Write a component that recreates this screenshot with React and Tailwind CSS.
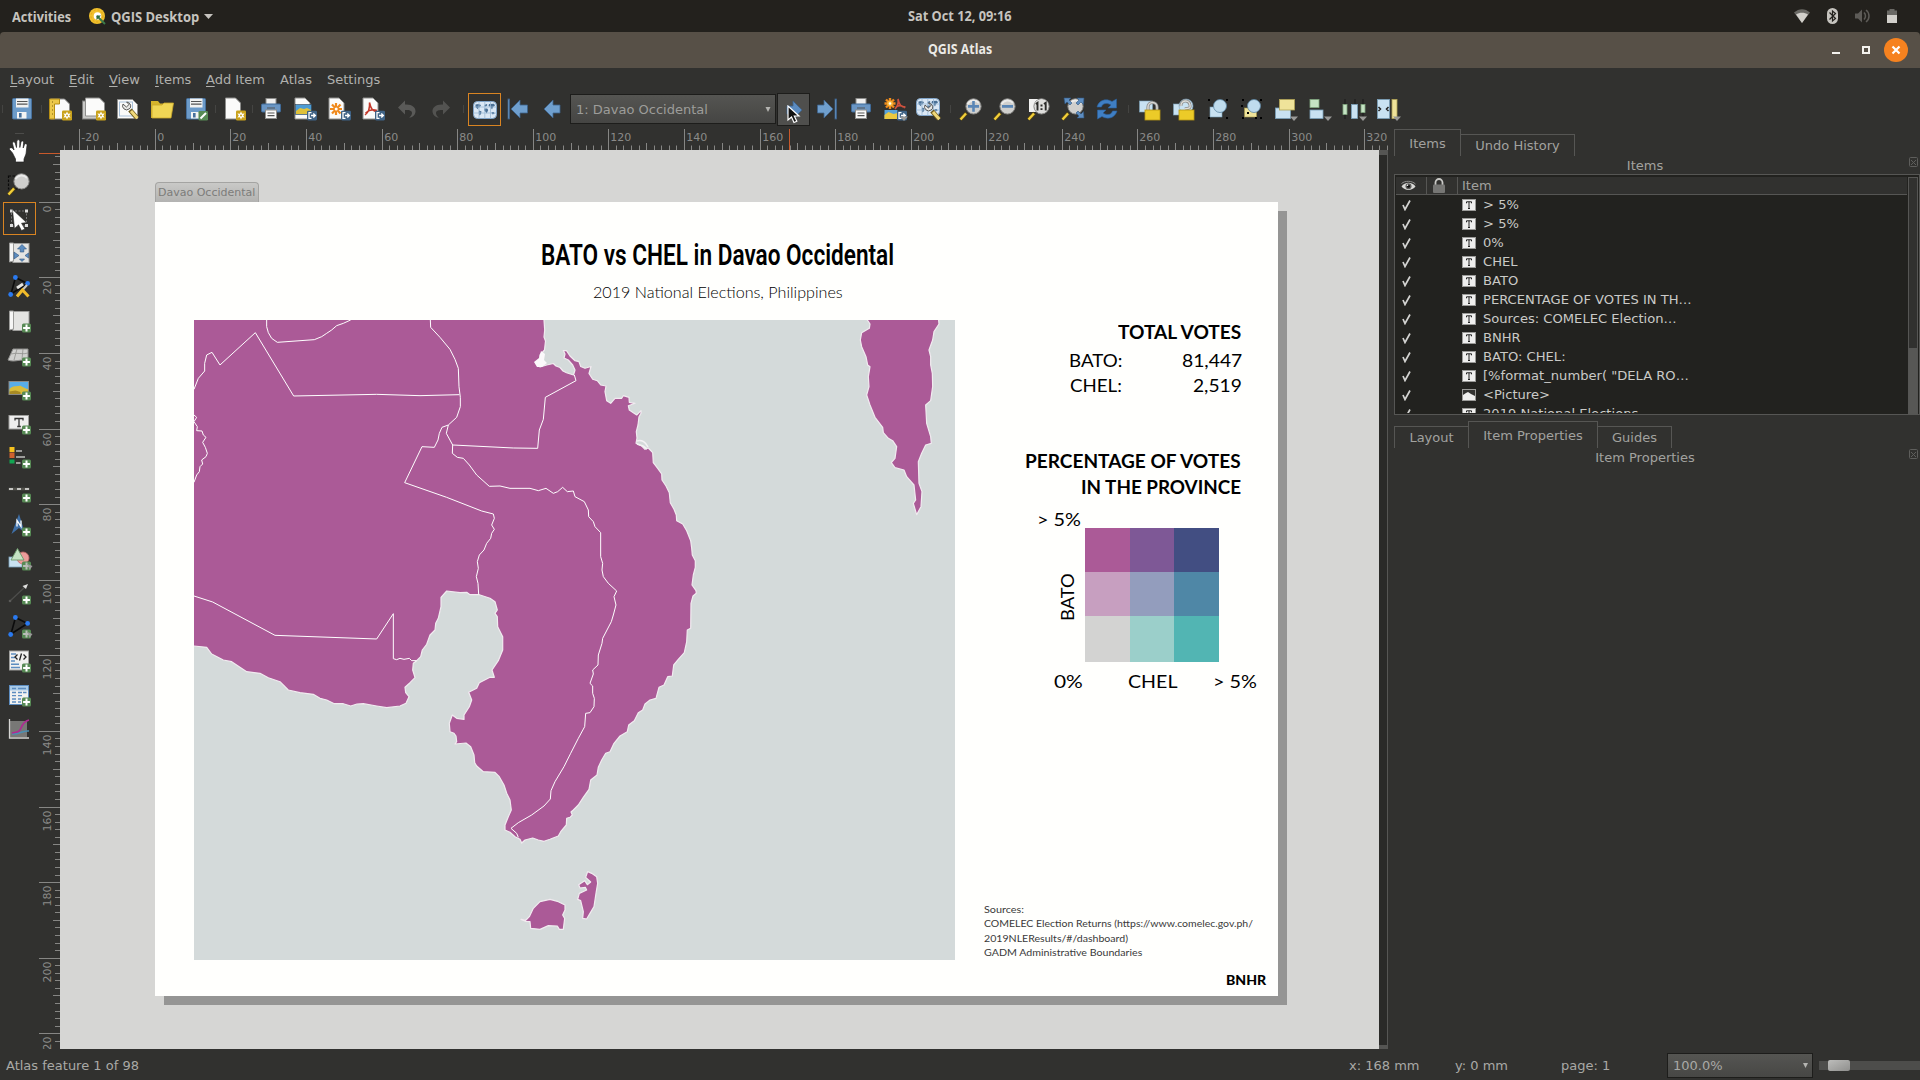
import React, { useLayoutEffect, useRef, useState } from "react";

/* ---------- text that is condensed or widened to a given width ---------- */
function Fit({ w, className, children }) {
  const ref = useRef(null);
  const [s, setS] = useState(1);
  useLayoutEffect(() => {
    setS(w / ref.current.offsetWidth);
  }, [w]);
  return (
    <span
      ref={ref}
      className={"inline-block origin-left whitespace-pre " + (className || "")}
      style={{ transform: `scaleX(${s})` }}
    >
      {children}
    </span>
  );
}

/* ---------- icon parts ---------- */
const Plus = ({ x = 7.5, y = 7, dim }) => (
  <g transform={`translate(${x} ${y})`}>
    <rect x="-4.5" y="-4.5" width="9" height="9" rx="1.5" fill="#578a55" />
    <path d="M0-3.4V3.4M-3.4 0H3.4" stroke={dim ? "#b9bdb8" : "#fff"} strokeWidth="2" />
    {dim && <path d="M1-2 6 0 3 4z" fill="#9a9a98" />}
  </g>
);
const Star = () => (
  <g transform="translate(7 6.5)">
    <rect x="-5" y="-5" width="10" height="10" rx="1.3" fill="#c9a21c" />
    <path d="M0-4 1.1-1.7 3.6-2 2.2 0 3.6 2 1.1 1.7 0 4-1.1 1.7-3.6 2-2.2 0-3.6-2-1.1-1.7z" fill="#fff" />
    <circle r="1" fill="#c9a21c" />
  </g>
);
const Export = () => (
  <g transform="translate(7 6.5)">
    <rect x="-5" y="-4.7" width="10" height="9.6" rx="1.3" fill="#3f6386" />
    <path d="M-.5-2.8H-3V2.8H-.5M-1 0H3M1.3-2 3.4 0 1.3 2" stroke="#fff" strokeWidth="1.3" fill="none" />
  </g>
);
const Sheet = ({ x = -9, y = -11, w = 15, h = 21 }) => (
  <path
    d={`M${x} ${y}h${w - 5}l5 5v${h - 5}h${-w}z`}
    fill="#fbfbfa"
    stroke="#8e8e8c"
    strokeWidth="1"
  />
);
const Wrench = () => (
  <g>
    <path d="M1 0 8 8" stroke="#6d5a1c" strokeWidth="4.6" />
    <path d="M2 1 8.4 8.3" stroke="#f0d878" strokeWidth="3" />
    <path d="M-6-6a4 4 0 0 0 6 5l1.4-1.2A4.2 4.2 0 0 0-2.4-8L0-5.5-2.6-3z" fill="#e6e6e4" stroke="#4c4c4a" strokeWidth=".9" />
  </g>
);
const Lens = ({ children }) => (
  <g>
    <path d="M-10.5 10.5-4.5 4" stroke="#5b4a12" strokeWidth="3.6" />
    <path d="M-10.5 10.5-5 4.5" stroke="#f2cf3a" strokeWidth="2.4" />
    <circle cx="2.5" cy="-2.6" r="7.6" fill="#cfcfcd" stroke="#8a8a88" strokeWidth="1" />
    <path d="M-3.5-5A7 7 0 0 1 8-6" stroke="#ebebea" strokeWidth="2" fill="none" />
    {children}
  </g>
);
const World = () => (
  <g>
    <rect x="-11.5" y="-8.5" width="23" height="17" rx="4" fill="#dbe8f5" stroke="#7fa3c8" strokeWidth="1" />
    <path d="M-9.500-5.500l3-.5 2.500 1-1 2-2 1 .5 1.500-1.500-1-1.500-1.500zM-6 .5l2.500 1-.5 2.500-1.500 1.500-.8-2.500zM-.5-5l2-1 1 1-1.500 1.500-1.500 0zM-.8-1.500l3 0 1 1.500-1.500 3.500-1-1.500-1.500-1.500zM4-6l5-.3 1 1.800-2 1.500-1 2.500-1.500-2.500-2-1zM6.500 2l2.500 0 .5 2-2.500.3z" fill="#4a7096" />
    <path d="M-6-8.500V8.500M-.2-8.500V8.500M5.500-8.500V8.500M-11.500-3H11.500M-11.500 3H11.500" stroke="#9dbad6" strokeWidth=".8" />
  </g>
);
const Printer = () => (
  <g>
    <rect x="-5" y="-10.5" width="10" height="7" fill="#f0f0ef" stroke="#8e8e8c" />
    <rect x="-9.5" y="-5" width="19" height="8" rx="1" fill="#6a96c4" stroke="#3f6a98" />
    <rect x="-5.5" y="1" width="11" height="8.5" fill="#fafaf9" stroke="#8e8e8c" />
    <path d="M-4-1H4M-3.5 4H3.5M-3.5 6.6H3.5" stroke="#555" strokeWidth="1.2" />
  </g>
);
const Down = ({ x = 8 }) => <path d={`M${x - 4} 7.5h8l-4 4.5z`} fill="#9a9a98" />;
const Nodes = () => (
  <g>
    <path d="M-8 7-3.5-9.5 8.5-3.5z" fill="none" stroke="#0c0c0c" strokeWidth="1.6" />
    <g fill="#2a7af0">
      <circle cx="-8.3" cy="7.5" r="2.4" />
      <circle cx="-3.6" cy="-9.5" r="2.4" />
      <circle cx="8.6" cy="-3.6" r="2.4" />
    </g>
  </g>
);
const Roll = () => (
  <g>
    <rect x="-6" y="-9.5" width="16" height="19" fill="#e4e4e2" stroke="#9c9c9a" />
    <path d="M-9.5-10h4V8l-4 1z" fill="#f6f6f5" stroke="#9c9c9a" />
  </g>
);
const Handles = () => (
  <g fill="#000">
    <rect x="-10" y="-10" width="2" height="2" />
    <rect x="8" y="-10" width="2" height="2" />
    <rect x="-10" y="8" width="2" height="2" />
    <rect x="8" y="8" width="2" height="2" />
  </g>
);

const ICONS = {
  save: (
    <g>
      <rect x="-9.5" y="-10.5" width="19" height="20.5" rx="1" fill="#6c9bc9" stroke="#47709c" />
      <rect x="-6" y="-10.5" width="12.5" height="9" fill="#f2f2f1" />
      <path d="M-5-7.5H5.5M-5-4.8H5.5" stroke="#555" strokeWidth="1.2" />
      <rect x="-5" y="3" width="9.5" height="6.5" fill="#f4f4f3" />
      <rect x="-3" y="4" width="2.6" height="4.5" fill="#47709c" />
    </g>
  ),
  newLayout: (
    <g>
      <Sheet x={-9.5} y={-10} w={19} h={20} />
      <path d="M-10.5-10h10v5h-5v15h-5z" fill="#ecc84a" stroke="#b58d14" />
      <path d="M-8-7h1M-8-3h1M-8 1h1M-8 5h1" stroke="#7a5e0c" />
      <Star />
    </g>
  ),
  duplicate: (
    <g>
      <rect x="-11.5" y="-8" width="18" height="18" fill="#c9c9c7" stroke="#7e7e7c" />
      <Sheet x={-8.5} y={-11} w={19} h={18} />
      <Star />
    </g>
  ),
  manager: (
    <g>
      <Sheet x={-10.5} y={-9.5} w={20} h={19} />
      <rect x="-8.5" y="-7" width="13" height="14" fill="none" stroke="#a9c1da" />
      <g transform="translate(1 1)"><Wrench /></g>
    </g>
  ),
  open: (
    <g>
      <path d="M-11-8h7l2 2.5h9V9H-11z" fill="#d6b42c" />
      <path d="M-10 9V-4H0l2-2H11.5L9 9z" fill="#f0d655" stroke="#c9a728" strokeWidth=".8" />
    </g>
  ),
  saveTemplate: (
    <g>
      <rect x="-9.5" y="-10.5" width="19" height="20.5" rx="1" fill="#6c9bc9" stroke="#47709c" />
      <rect x="-6" y="-10.5" width="12.5" height="9" fill="#f2f2f1" />
      <path d="M-5-7.5H5.5M-5-4.8H5.5" stroke="#555" strokeWidth="1.2" />
      <rect x="-5" y="3" width="9.5" height="6.5" fill="#f4f4f3" />
      <rect x="-3" y="4" width="2.6" height="4.5" fill="#47709c" />
      <rect x="2.5" y="2" width="9.5" height="9.5" rx="1.3" fill="#578a55" />
      <path d="M4.5 9.5 10 4" stroke="#fff" strokeWidth="2" />
    </g>
  ),
  addPage: (
    <g>
      <Sheet x={-8.5} />
      <Star />
    </g>
  ),
  print: <Printer />,
  image: (
    <g>
      <Sheet x={-10} />
      <rect x="-9.5" y="-4.5" width="16" height="10" fill="#4b9bd4" stroke="#345" strokeWidth=".6" />
      <path d="M-9 5V2l4-3 4 1 3-1 4 2v4z" fill="#e0c23a" />
      <Export />
    </g>
  ),
  svg: (
    <g>
      <Sheet x={-10} />
      <path d="M-3-6V6M-9 0H3M-7-4.5 1.5 4.5M-7 4.5 1.5-4.5" stroke="#f08a1c" strokeWidth="2.2" />
      <circle cx="-2.8" r="1.5" fill="#fff" />
      <Export />
    </g>
  ),
  pdf: (
    <g>
      <Sheet x={-10} />
      <path d="M-3.5-6.5C-2 1 0 2 5 3M-3.5-6.5C-3 0-4.5 3.500-8 6M-7.500 4C-4 1 0 0 4 1.500" stroke="#c4392b" strokeWidth="1.500" fill="none" />
      <Export />
    </g>
  ),
  undo: <path d="M-9-1.500-2-8.500V-4.500C5-5 9-1.500 8.500 3 8 6.500 5.500 8.500 2 8.800 5 6.500 5.500 4 4.500 2.500 3.500 1-.5 1-2 1V5.500z" fill="#5a5a58" />,
  redo: <path d="M9-1.500 2-8.500V-4.500C-5-5-9-1.500-8.500 3-8 6.500-5.500 8.500-2 8.800-5 6.500-5.500 4-4.500 2.500-3.500 1 .5 1 2 1V5.500z" fill="#535351" />,
  world: <World />,
  first: (
    <g fill="#6f9fce" stroke="#3c628c" strokeWidth=".8">
      <path d="M-7 0 2-9V-4H9.500V4H2V9z" />
      <rect x="-10" y="-10" width="1.500" height="20" />
    </g>
  ),
  prev: <path d="M-8 0 1-9V-4H8V4H1V9z" fill="#6f9fce" stroke="#3c628c" strokeWidth=".8" />,
  next: <path d="M8 0-1-9V-4H-7V4H-1V9z" fill="#5b8bc0" stroke="#3c628c" strokeWidth=".8" />,
  last: (
    <g fill="#6f9fce" stroke="#3c628c" strokeWidth=".8">
      <path d="M6 0-3-9V-4H-9.500V4H-3V9z" />
      <rect x="8" y="-10" width="1.500" height="20" />
    </g>
  ),
  exportAtlas: (
    <g>
      <rect x="-10.500" y="1" width="13" height="9" fill="#5aa4d8" />
      <path d="M-10.500 10V6l4-3 5 2 4-1v6z" fill="#ecc940" />
      <path d="M-5-11V0M-10.500-5.500H.5M-9-9.500-1-1.500M-9-1.500-1-9.500" stroke="#f08c1c" strokeWidth="2.400" />
      <circle cx="-5" cy="-5.500" r="2.800" fill="#f6b73c" />
      <circle cx="-5" cy="-5.500" r="1.300" fill="#fff" />
      <path d="M3-10C4-4 6-2 10.500-2M3-10C4-5 2-2 0 0M1-2C4-4 7-4 10-1" stroke="#d0523e" strokeWidth="1.700" fill="none" />
      <Export />
      <Down x={9} />
    </g>
  ),
  atlasSettings: (
    <g>
      <g transform="translate(-1 -2)"><World /></g>
      <g transform="translate(2 2)"><Wrench /></g>
    </g>
  ),
  zoomIn: <Lens><path d="M2.500-8V2.800M-3-2.600H8" stroke="#5a86b6" strokeWidth="2.600" /></Lens>,
  zoomOut: <Lens><path d="M-3-2.600H8" stroke="#5a86b6" strokeWidth="2.800" /></Lens>,
  zoomActual: (
    <g>
      <rect x="-10" y="-10" width="9" height="13" fill="#f1f1f0" />
      <Lens>
        <circle cx="2.500" cy="-2.600" r="6.800" fill="#dededc" />
        <path d="M-3.200-5-1.500-6.200V1.500M5-5 6.700-6.200V1.500" stroke="#2c2c2a" strokeWidth="1.900" fill="none" />
        <path d="M1.500-4.500h2v1.900h-2zM1.500-.8h2v1.900h-2z" fill="#2c2c2a" />
      </Lens>
    </g>
  ),
  zoomFull: (
    <g>
      <Lens />
      <g fill="#5d8dc0" stroke="#2f5680" strokeWidth=".6">
        <path d="M-9-11h7L-4-9l3 3-2 2-3-3-2 2zM11-11H4l2 2-3 3 2 2 3-3 2.500 2.500zM11 9H4l2-2-3-3 2-2 3 3 2.500-2.500z" />
      </g>
    </g>
  ),
  refresh: (
    <g fill="#3f7fc4" stroke="#2a5f9c" strokeWidth=".6">
      <path d="M-10-2C-8-9-1-11 5-7.500L9.500-10V-1H1L4-4C-1-7-5-5-5.500-2z" />
      <path d="M10 2C8 9 1 11-5 7.500L-9.500 10V1H-1L-4 4C1 7 5 5 5.500 2z" />
    </g>
  ),
  lock: (
    <g>
      <rect x="-10.500" y="-8" width="13" height="11" fill="#c9e2f2" stroke="#7aa0ba" strokeWidth=".6" />
      <path d="M-2 1V-2a4.500 4.500 0 0 1 9 0V1" fill="none" stroke="#8c8c8a" strokeWidth="3.200" />
      <path d="M-2 1V-2a4.500 4.500 0 0 1 9 0V1" fill="none" stroke="#d9d9d6" strokeWidth="1.500" />
      <rect x="-5" y="1" width="15" height="10" fill="#eccb28" stroke="#b8960f" strokeWidth=".8" />
    </g>
  ),
  unlock: (
    <g>
      <rect x="-10.500" y="-5" width="10" height="11" fill="#c9e2f2" stroke="#7aa0ba" strokeWidth=".6" />
      <circle cx="2" cy="-3" r="7" fill="#c9e2f2" stroke="#7aa0ba" strokeWidth=".6" />
      <path d="M-3-3a4.500 4.500 0 0 1 9-1C7 0 4-1 1 0" fill="none" stroke="#8c8c8a" strokeWidth="3" />
      <path d="M-3-3a4.500 4.500 0 0 1 9-1C7 0 4-1 1 0" fill="none" stroke="#dededb" strokeWidth="1.400" />
      <rect x="-5" y="1" width="15" height="10" fill="#eccb28" stroke="#b8960f" strokeWidth=".8" />
    </g>
  ),
  group: (
    <g>
      <rect x="-8" y="-2" width="12" height="10" fill="#c9e2f2" stroke="#7aa0ba" strokeWidth=".6" />
      <circle cx="2" cy="-3" r="6.500" fill="#bfdcee" stroke="#5d87a4" strokeWidth=".8" />
      <Handles />
    </g>
  ),
  ungroup: (
    <g>
      <rect x="-7.500" y="-1" width="12" height="9" fill="#efe39a" stroke="#a89a4a" strokeWidth=".6" />
      <circle cx="2" cy="-3" r="6.500" fill="#bfdcee" stroke="#5d87a4" strokeWidth=".8" />
      <Handles />
      <path d="M-11-4h2v2h-2zM-5 3h2v2h-2zM3 8h2v2h-2z" fill="#000" />
    </g>
  ),
  raise: (
    <g>
      <rect x="-10.500" y="-1" width="15" height="10.500" fill="#c9e2f2" stroke="#7aa0ba" strokeWidth=".8" />
      <rect x="-6.500" y="-9.500" width="15" height="10.500" fill="#efe39a" stroke="#b0a256" strokeWidth=".8" />
      <Down />
    </g>
  ),
  align: (
    <g>
      <rect x="-10" y="-9.500" width="9" height="8" fill="#c5e3c4" stroke="#7fa67e" strokeWidth=".8" />
      <rect x="-10" y="1" width="13" height="8.500" fill="#c9e2f2" stroke="#7aa0ba" strokeWidth=".8" />
      <Down />
    </g>
  ),
  distribute: (
    <g>
      <path d="M-9-10V10M1-10V10M9-10V10" stroke="#151515" strokeWidth=".8" />
      <rect x="-11" y="-4.500" width="4" height="10" fill="#c5e3c4" stroke="#7fa67e" strokeWidth=".8" />
      <rect x="-2.500" y="-4.500" width="6" height="14" fill="#c9e2f2" stroke="#7aa0ba" strokeWidth=".8" />
      <rect x="7" y="-4.500" width="4" height="8" fill="#c5e3c4" stroke="#7fa67e" strokeWidth=".8" />
      <Down x={9} />
    </g>
  ),
  resize: (
    <g>
      <rect x="-10.500" y="-9.500" width="12" height="19" fill="#c9e2f2" stroke="#7aa0ba" strokeWidth=".8" />
      <path d="M-9.500-2-7.500 0-9.500 2M.5-2-1.500 0 .5 2" stroke="#222" strokeWidth="1.500" fill="none" />
      <rect x="4" y="-9.500" width="5" height="19" fill="#efe39a" stroke="#b0a256" strokeWidth=".8" />
      <Down x={9} />
    </g>
  ),
  hand: (
    <path
      d="M-6.500 2-9.500 -1.500C-10-3-8-4-6.500-2.800L-5-1-6.500-7.500C-6.500-9.500-4.500-9.800-3.800-8L-2.500-3.500-2.200-10C-1.800-11.700.8-11.700.8-9.800V-3.500L2-9C2.500-10.700 4.800-10.200 4.600-8.500L4.200-3 5.500-6.500C6.300-8 8.500-7.200 8-5.500L7 3 5 8V11H-3.500V8z"
      fill="#fff"
      stroke="#222"
      strokeWidth=".7"
    />
  ),
  zoomTool: (
    <g>
      <rect x="-10.500" y="-8" width="12" height="13" fill="none" stroke="#0a0a0a" strokeWidth="1.200" strokeDasharray="2.500 1.500" />
      <Lens />
    </g>
  ),
  select: (
    <g>
      <rect x="-8.500" y="-8" width="15" height="15" fill="none" stroke="#777" strokeDasharray="2 1.500" />
      <g fill="#ddd">
        <rect x="-10" y="-9.500" width="3" height="3" />
        <rect x="5" y="-9.500" width="3" height="3" />
        <rect x="-10" y="5" width="3" height="3" />
        <rect x="5" y="5" width="3" height="3" />
      </g>
      <path d="M-7.500-9.500 6.500 3.500 1.500 4.200 4.800 10 1.500 11.500-1.500 5.800-5.500 9.500z" fill="#fff" stroke="#222" strokeWidth=".5" />
    </g>
  ),
  moveContent: (
    <g>
      <Roll />
      <path d="M3-8.500 7.500-4H4.800V-1H1.200V-4H-1.500zM3 8.500 .5 6h5zM-5-1 0 2.500-5 6zM9.500 0v5L6 2.500z" fill="#5d8dc0" stroke="#2f5680" strokeWidth=".6" />
    </g>
  ),
  editNodes: (
    <g>
      <Nodes />
      <path d="M-2 9 8-2" stroke="#c8c8c6" strokeWidth="2.200" />
      <path d="M-2 9.500 3.500 3 9.500 9.500" stroke="#f0bb2a" strokeWidth="3" fill="none" />
      <path d="M-2 1 4-3" stroke="#e4e4e2" strokeWidth="3" />
    </g>
  ),
  addMap: <g><Roll /><Plus /></g>,
  add3d: (
    <g>
      <path d="M-11 5-6-6 9-6V6C2 3-4 8-11 5z" fill="#d0d0ce" stroke="#8f8f8d" />
      <path d="M-8-1C-2-3 4 0 9-2M-2-6-5 5M4-6 3 4" stroke="#8f8f8d" strokeWidth=".8" fill="none" />
      <Plus />
    </g>
  ),
  addPicture: (
    <g>
      <rect x="-10" y="-7.500" width="19.500" height="13" fill="#58ade8" stroke="#8a8a88" />
      <path d="M-9.500 5V0C-6-4-2-2 1-3.500 4-2 7 0 9 0V5z" fill="#d9bd3c" />
      <path d="M-9.500 5V2.500l6-1 5 1.500v2z" fill="#a78a24" />
      <Plus />
    </g>
  ),
  addLabel: (
    <g>
      <rect x="-10" y="-7.500" width="19.500" height="13.500" fill="#eee" stroke="#a0a09e" />
      <path d="M-4-2.500V-4.500H4V-2.500M0-4.500V3.500M-1.800 3.500H1.800" stroke="#333" strokeWidth="1.300" fill="none" />
      <Plus />
    </g>
  ),
  addLegend: (
    <g>
      <rect x="-9.500" y="-10" width="5" height="5" fill="#f6c21e" />
      <rect x="-9.500" y="-4.500" width="5" height="5.500" fill="#cf6230" />
      <rect x="-9.500" y="2.500" width="5" height="4" fill="#12a552" />
      <path d="M-3-6H3M-3 0H6M-3 6H1.500" stroke="#9c9c9a" strokeWidth="1.800" />
      <Plus />
    </g>
  ),
  addScale: (
    <g>
      <path d="M-10.500-2H10.500" stroke="#55554f" strokeWidth="2.600" />
      <path d="M-10-2H10" stroke="#c6c6c3" strokeWidth="1.800" strokeDasharray="4 4" />
      <Plus />
    </g>
  ),
  addNorth: (
    <g>
      <path d="M0-11 6 8 0 3-7.500 9z" fill="#3f6fa6" />
      <path d="M-2 1.500V-4.500L2 1.500V-4.500" stroke="#fff" strokeWidth="1.300" fill="none" />
      <Plus />
    </g>
  ),
  addShape: (
    <g>
      <rect x="-10" y="-2" width="13" height="10" fill="#c9e2f2" stroke="#7aa0ba" strokeWidth=".8" />
      <circle cx="4" cy="-1" r="6" fill="#eb9c9a" stroke="#c06a68" strokeWidth=".8" />
      <path d="M-1.500-10.500 5 1H-8z" fill="#c5e3c4" stroke="#6b996a" strokeWidth=".9" />
      <Plus dim />
    </g>
  ),
  addArrow: (
    <g>
      <path d="M-9 8 7-7" stroke="#4e4e4c" strokeWidth="1.300" />
      <circle cx="-9" cy="8" r="1.300" fill="#5a5a58" />
      <path d="M9-9 7-4 3.500-7z" fill="#e0e0de" />
      <Plus />
    </g>
  ),
  addNode: <g><Nodes /><Plus dim /></g>,
  addHtml: (
    <g>
      <rect x="-9.500" y="-10" width="19" height="19" fill="#f1f1f0" stroke="#a0a09e" />
      <path d="M-8-7H-3M-8-3.500H-4M-8 0H-4M-8 3.200H0M-8 6.400H1" stroke="#5d8dc0" strokeWidth="1.500" />
      <path d="M-1.500-6.500-4-4-1.500-1.500M4.500-6.500 7-4 4.500-1.500M2.500-7.500.5-.5" stroke="#222" strokeWidth="1.300" fill="none" />
      <Plus />
    </g>
  ),
  addTable: (
    <g>
      <rect x="-9.500" y="-9.500" width="19" height="19" fill="#f1f1f0" stroke="#5d8dc0" />
      <rect x="-9" y="-9" width="18" height="4.500" fill="#a9cbe8" />
      <path d="M-7-6.500H-3M-1-6.500H7M-7-2.500H-3M-1-2.500H3M4-2.500H7.500M-7 .7H-3M-1 .7H3M-7 4H-3M-1 4H2M-7 7H-3M-1 7H2" stroke="#5d8dc0" strokeWidth="1.300" />
      <Plus />
    </g>
  ),
  addPlot: (
    <g>
      <rect x="-9" y="-8" width="17" height="16" fill="#787876" />
      <path d="M-9.500-10V9H10" stroke="#d6d6d4" strokeWidth="1.300" fill="none" />
      <path d="M-7 5C0 6 3 1 10 2" stroke="#4b8fb4" strokeWidth="1.500" fill="none" />
      <path d="M-7 4C-3 3 0 4 2-1 4-6 6-8 10-9" stroke="#b02a93" strokeWidth="1.700" fill="none" />
    </g>
  ),
};

const Icon = ({ n }) => (
  <svg className="h-6 w-6 overflow-visible" viewBox="-12 -12 24 24">
    {ICONS[n]}
  </svg>
);
const Slot = ({ n }) => (
  <div className="flex h-[34px] w-[34px] shrink-0 items-center justify-center">
    <Icon n={n} />
  </div>
);
const Slots = ({ names }) => (
  <div className="flex shrink-0">
    {names.map((n, i) => (
      <Slot key={i} n={n} />
    ))}
  </div>
);

/* ---------- rulers ---------- */
const MM = 3.7795;
const range = (a, b, s) => {
  const out = [];
  for (let v = a; v <= b; v += s) out.push(v);
  return out;
};
function HRuler() {
  return (
    <svg className="h-[21px] w-[1352px]" viewBox="36 129 1352 21">
      {range(-24, 326, 2).map((v) => {
        const x = Math.floor(155.3 + v * MM) + 0.5;
        const top = v % 20 === 0 ? 129 : v % 10 === 0 ? 143 : 145.5;
        return <path key={v} d={`M${x} ${top}V150`} stroke="#868684" strokeWidth="1" />;
      })}
      {range(-20, 320, 20).map((v) => (
        <text key={v} x={Math.floor(155.3 + v * MM) + 2.3} y="141" fontSize="11" fill="#8a8a88" fontFamily="DejaVu Sans, sans-serif">
          {v}
        </text>
      ))}
      <path d="M789.500 129V150" stroke="#c8592b" strokeWidth="1" />
    </svg>
  );
}
function VRuler() {
  return (
    <svg className="h-[899px] w-6 shrink-0" viewBox="36 150 24 899">
      {range(-12, 222, 2).map((v) => {
        const y = Math.floor(202.3 + v * MM) + 0.5;
        const l = v % 20 === 0 ? 39 : v % 10 === 0 ? 53 : 55;
        return <path key={v} d={`M${l} ${y}H60`} stroke="#868684" strokeWidth="1" />;
      })}
      {range(0, 220, 20).map((v) => (
        <text
          key={v}
          transform={`translate(51.300 ${Math.floor(202.3 + v * MM) + 3.5}) rotate(-90)`}
          textAnchor="end"
          fontSize="11"
          fill="#8a8a88"
          fontFamily="DejaVu Sans, sans-serif"
        >
          {v}
        </text>
      ))}
      <path d="M39 153.500H60" stroke="#c8592b" strokeWidth="1" />
    </svg>
  );
}

/* ---------- map ---------- */
const LAND =
  "194,310 544,310 544,320 544.7,330 544,337 545.500,341 544.5,350 540,355 540,367 546.7,365 553.3,363.5 556,366 560,367.5 563,371 566.5,372.7 573.5,375 575,370 572.7,365 568.3,360 564,358 565,354 563.3,350.5 566.5,350.7 570,356 575,360.7 579,361.7 580.7,366.5 585,368.3 591,366.5 589,373.5 592.7,379.3 597.3,380.7 600.7,385 606,386 605,391.7 606.7,400.7 610.7,403.3 615,398.3 621.7,398.3 623.3,395.7 629,397.3 629.3,402.3 635,403.3 628.3,405.7 629.3,410 633.3,412.7 636.7,415 641,410.7 641,413.3 639,416.7 638,425 636.3,431.7 637,438 636,443.3 641.7,446 645,449.3 648.3,448 652.7,452.7 653.3,462.7 657.7,468.3 661.7,474 662,480 666,486 669.3,492.7 670.3,502.7 674,509.3 676.3,515 676.7,520.7 682.7,524 686.7,530.7 690.7,540.7 691.7,548.3 692.3,555 695.3,560.7 695.3,567.3 693.3,575 692,585 696,590.7 696.3,593.3 693,596 691,603.3 690.7,628.3 687.3,630 686.7,641.7 684.3,652.7 678.3,659.3 673.7,665 672.3,676 667.7,676.7 664,685 659,687.3 656,698.3 650,700 645,704 642.7,710 638.3,712.7 634.3,720.7 628.7,725 627.3,731.7 620,736 614,743.3 610,751.7 605.7,753.3 601.7,760 598.3,767.3 597,775 590.7,780 589,789.3 583.3,797.3 578.3,805 573.3,810 571,812 572.3,815 570,817.3 566.7,818.3 566.3,825 560.7,831.7 558.3,836 550,839.3 544,841.3 538.3,840 532.7,838 525,840 521.7,843 520,839.3 515,836.7 510,832.3 505,830 505,825 508.3,816.7 511.3,810 510,800 506.7,793.3 504,785 499.3,776.7 495,772.3 483.3,771.7 476.7,766 474.7,762.7 474,755 470.7,746.7 466,743 455,744 456.7,741.7 456,736 454,733.3 450,731.7 449.3,723.3 452.3,715 456.7,718.3 464,719.3 464,715 469.3,706.7 471.7,700 468.7,692.3 476.7,688.3 479.3,682.7 490,677.3 494.3,677.3 492,670 498.3,660.7 502.7,650 502.7,636.7 497.7,626.7 497.3,616.7 495,613.3 497.3,610 495,601.7 490,598.3 479.3,594.7 470,594.7 466.7,592.3 460,592.7 446.7,591 441,597.3 441,606.7 438.3,618.3 435.7,623.3 435,630 430,635 426.7,644.3 422.3,650 420.7,656.7 416.7,660.7 413.3,663.3 412.7,670 415,677.7 410,682.7 405,687.3 405.7,692.7 409,696.7 406,703.3 400,706 386.7,707.7 376.7,706 363.3,703.7 357,704 350.7,706 343.3,703.7 334.3,703.7 326.7,700 320,698.3 313.3,694.3 300,692.7 288.3,690 280,681.7 268.3,677.7 260,673.3 246.7,671.7 231.7,661.7 223.3,660 211.7,654 206.7,647.3 194,646 184,646 184,310";
const BORDERS = [
  "260,30 260,50 265,68 275,85 292,97 403,89 425,80 440,70 455,60 470,47 490,40 512,30",
  "42,238 55,205 74,183 74,160 80,135 96,127 120,165 226,68 341,258 590,253 720,257 838,254",
  "751,30 752,52 780,82 810,118 825,148 835,175 837,230 841,262 841,290 830,322 805,345 786,352 778,370 774,390 763,412 726,410 674,518 800,562 905,603 940,612 943,625 935,645 943,658 935,670 932,685 920,700 912,720 898,735 892,755 895,775 889,800 894,820 896,853",
  "805,345 799,370 818,405 1000,414 1073,415 1078,360 1090,328 1096,262 1188,212 1183,195",
  "818,405 817,430 832,442 850,445 868,465 890,495 928,529 960,528 990,535 1050,535 1075,542 1098,535 1120,550 1133,545 1148,532 1162,545 1180,543 1185,560 1213,575 1225,600 1226,620 1240,635 1245,650 1262,668 1262,740 1268,760 1266,780 1270,800 1285,820 1310,843 1302,860 1308,885 1300,915 1294,935 1268,985 1266,1000 1255,1035 1254,1065 1238,1080 1240,1092 1230,1120 1238,1128 1238,1150 1243,1165 1242,1190 1230,1208 1217,1210 1214,1250 1195,1285 1172,1330 1152,1370 1125,1415 1113,1442 1111,1467 1092,1488 1055,1515 1015,1538 993,1555 1010,1570 1015,1582",
  "42,858 98,876 285,976 590,987 640,911 640,1046 650,1049 660,1045 672,1048 688,1045 695,1052 710,1052",
  "42,315 50,322 42,335 52,350 50,362 66,363 70,375 78,382 68,397 76,412 82,430 78,440 65,450 68,462 60,470 58,485 50,495 42,517",
];
function MapItem() {
  return (
    <svg className="absolute left-[39px] top-[118px] h-[640px] w-[761px]" viewBox="194 320 761 640">
      <rect x="194" y="320" width="761" height="640" fill="#d4dada" />
      <g fill="#ab5a97" stroke="#f1ebf0" strokeWidth="1.200" strokeLinejoin="round">
        <polygon points={LAND} />
        <g transform="translate(540 310) scale(.33333)" strokeWidth="3.600">
          <polygon points="982,20 982,30 990,42 988,55 965,68 961,90 965,110 978,140 983,165 990,170 985,200 987,230 980,255 990,285 1005,322 1028,352 1030,368 1045,385 1058,392 1070,410 1065,445 1054,458 1065,473 1092,480 1100,500 1122,525 1127,570 1120,580 1130,614 1143,590 1146,545 1137,520 1135,455 1145,430 1157,405 1174,400 1172,380 1160,340 1157,285 1172,272 1178,230 1177,190 1172,165 1172,140 1167,120 1178,90 1182,65 1197,42 1195,20" />
        </g>
        <g transform="translate(440 560) scale(.33333)" strokeWidth="3.600">
          <polygon points="443,935 455,940 470,950 473,970 468,1000 462,1040 450,1060 440,1077 428,1075 430,1055 422,1022 413,1018 418,1000 440,990 436,982 420,984 416,974 434,962 442,974 452,966 437,952" />
          <polygon points="243,1078 258,1080 268,1070 280,1045 300,1025 330,1018 355,1025 375,1035 375,1050 368,1065 374,1075 370,1108 358,1108 352,1098 325,1097 300,1108 272,1105 270,1085 258,1084" />
        </g>
      </g>
      <polygon points="541,351 545,354 544,360 547,363 542,367 537,367 534,362 539,358" fill="#fbf9fb" />
      <path d="M637 441C642 439 646 443 648 447M637 444l6 2 4 3" fill="none" stroke="#f4f2f4" strokeWidth="1.600" />
      <g transform="translate(180 310) scale(.33333)" fill="none" stroke="#fff" strokeWidth="3" strokeLinejoin="round">
        {BORDERS.map((p, i) => (
          <polyline key={i} points={p} />
        ))}
      </g>
    </svg>
  );
}

/* ---------- printed page ---------- */
const Label = ({ pos, w, children, className }) => (
  <div className={"absolute h-6 leading-6 text-black font-[Lato,sans-serif] " + pos}>
    <Fit w={w} className={className}>{children}</Fit>
  </div>
);
const LEGEND = [
  "bg-[#ab5a97]", "bg-[#7e5896]", "bg-[#424e82]",
  "bg-[#c79fc0]", "bg-[#939dbd]", "bg-[#4f87a6]",
  "bg-[#d3d3d2]", "bg-[#9bcfca]", "bg-[#52b5b3]",
];
function Page() {
  return (
    <div className="absolute left-[95px] top-[52px] h-[794px] w-[1123px] bg-[#fffffd] shadow-[9px_9px_0_0_#959594]">
      <div className="absolute left-0 top-[-20px] h-5 w-[104px] rounded-t-[4px] border border-b-0 border-[#a4a4a2] bg-linear-to-b from-[#c9c9c7] to-[#b3b3b1] pl-[2px] text-[11px] leading-[19px] text-[#7c7c7a]">
        <Fit w={97}>Davao Occidental</Fit>
      </div>
      <div className="absolute left-[386px] top-[33px] h-10 text-[30px] leading-10 text-black font-[Roboto,sans-serif]">
        <Fit w={353} className="font-semibold">BATO vs CHEL in Davao Occidental</Fit>
      </div>
      <Label pos="left-[438px] top-[78px]" w={250} className="text-base font-light">2019 National Elections, Philippines</Label>
      <MapItem />
      <Label pos="left-[963px] top-[118px]" w={123} className="text-[18px] font-bold">TOTAL VOTES</Label>
      <Label pos="left-[914px] top-[146px]" w={53} className="text-[18px]">BATO:</Label>
      <Label pos="left-[1027px] top-[146px]" w={60} className="text-[18px]">81,447</Label>
      <Label pos="left-[915px] top-[171px]" w={52} className="text-[18px]">CHEL:</Label>
      <Label pos="left-[1038px] top-[171px]" w={49} className="text-[18px]">2,519</Label>
      <Label pos="left-[870px] top-[247px]" w={216} className="text-[18px] font-bold">PERCENTAGE OF VOTES</Label>
      <Label pos="left-[926px] top-[273px]" w={160} className="text-[18px] font-bold">IN THE PROVINCE</Label>
      <Label pos="left-[882px] top-[305px]" w={44} className="text-[18px]">&gt; 5%</Label>
      <div className="absolute left-[930px] top-[326px] grid h-[134px] w-[134px] grid-cols-[45px_44px_45px] grid-rows-[44px_44px_46px]">
        {LEGEND.map((c, i) => (
          <div key={i} className={c} />
        ))}
      </div>
      <div className="absolute left-[900px] top-[419px] h-6 origin-top-left -rotate-90 leading-6 text-black font-[Lato,sans-serif]">
        <Fit w={48} className="text-[18px]">BATO</Fit>
      </div>
      <Label pos="left-[899px] top-[467px]" w={29} className="text-[18px]">0%</Label>
      <Label pos="left-[973px] top-[467px]" w={49} className="text-[18px]">CHEL</Label>
      <Label pos="left-[1058px] top-[467px]" w={44} className="text-[18px]">&gt; 5%</Label>
      <div className="absolute left-[829px] top-[700px] flex flex-col text-[10.300px] leading-[14.400px] text-[#3a3a3a] font-[Lato,sans-serif]">
        <Fit w={40} className="self-start">Sources:</Fit>
        <Fit w={269} className="self-start">COMELEC Election Returns (https://www.comelec.gov.ph/</Fit>
        <Fit w={144} className="self-start">2019NLEResults/#/dashboard)</Fit>
        <Fit w={158} className="self-start">GADM Administrative Boundaries</Fit>
      </div>
      <Label pos="left-[1071px] top-[765px]" w={40} className="text-[13px] font-black">BNHR</Label>
    </div>
  );
}

/* ---------- side panels ---------- */
const Tab = ({ className, children }) => (
  <div className={"flex shrink-0 justify-center border border-b-0 border-[#565654] text-[13px] text-[#a2a29f] " + className}>
    {children}
  </div>
);
const DockTitle = ({ children }) => (
  <div className="relative flex h-[18px] w-[526px] items-center justify-center pr-6 text-[13px] text-[#a2a29f]">
    {children}
    <svg className="absolute right-[2px] top-0 h-[10px] w-[9px]" viewBox="0 0 9 10">
      <rect x=".5" y=".5" width="8" height="9" rx="1" fill="none" stroke="#5e5e5c" />
      <path d="M2 3 7 8M7 3 2 8" stroke="#5e5e5c" />
    </svg>
  </div>
);
const ROWS = [
  "> 5%", "> 5%", "0%", "CHEL", "BATO", "PERCENTAGE OF VOTES IN TH…", "Sources: COMELEC Election…",
  "BNHR", "BATO: CHEL:", "[%format_number( \"DELA RO…", "<Picture>", "2019 National Elections…",
];
function Row({ text }) {
  return (
    <div className="flex h-[19px] shrink-0 items-center text-[13.100px] text-[#cacac7]">
      <svg className="ml-[6px] h-3 w-[9px]" viewBox="0 0 9 12">
        <path d="M1 6 3 10.500 8 1.500" fill="none" stroke="#d4d4d2" strokeWidth="1.700" />
      </svg>
      <svg className="ml-[51px] h-3 w-[14px]" viewBox="0 0 14 12">
        <rect x=".5" y=".5" width="13" height="11" fill="#efefee" stroke="#9a9a98" />
        {text === "<Picture>" ? (
          <path d="M1 1H13V7L9 5 6 3 4 4 1 6z" fill="#333331" />
        ) : (
          <path d="M4.500 4.300V2.800H9.500V4.300M7 2.800V9.500M6 9.500H8" stroke="#222" strokeWidth="1" fill="none" />
        )}
      </svg>
      <span className="ml-[7px] whitespace-pre">{text}</span>
    </div>
  );
}
function SidePanels() {
  return (
    <div className="flex h-[921px] w-[533px] shrink-0 flex-col pl-[7px] pt-px">
      <div className="flex h-[27px] items-end">
        <Tab className="h-[27px] w-[67px] pt-[4px]">Items</Tab>
        <Tab className="-ml-px h-[22px] w-[115px] pt-[1px]">Undo History</Tab>
      </div>
      <div className="h-px" />
      <DockTitle>Items</DockTitle>
      <div className="mt-[-1px] flex h-[241px] w-[526px] border border-[#565654] bg-[#22221f] p-[2px_0_0_1px]">
        <div className="flex h-[236px] w-[511px] flex-col overflow-hidden">
          <div className="flex h-[18px] shrink-0 items-center border-b border-[#565654] bg-[#31312f] text-[13px] text-[#a2a29f]">
            <div className="flex h-full w-[31px] items-center border-r border-[#565654] pl-[5px]">
              <svg className="h-3 w-[15px]" viewBox="0 0 15 12">
                <path d="M.5 6.500C4 1.500 11 1.500 14.500 6.500 11 11 4 11 .5 6.500z" fill="#d8d8d6" />
                <path d="M.5 3.500C4 .5 11 .5 14.500 4" fill="none" stroke="#8e8e8c" />
                <circle cx="7.500" cy="6.300" r="3" fill="#5a5a58" />
                <circle cx="7.500" cy="6.300" r="1.500" fill="#0c0c0c" />
                <circle cx="6.500" cy="5.300" r=".8" fill="#fff" />
              </svg>
            </div>
            <div className="flex h-full w-[31px] items-center border-r border-[#565654] pl-[6px]">
              <svg className="h-[15px] w-3" viewBox="0 0 12 15">
                <path d="M2.500 7V4.500a3.500 3.500 0 0 1 7 0V7" fill="none" stroke="#c9c9c6" strokeWidth="1.800" />
                <rect x="0" y="6.500" width="12" height="8.500" rx="1" fill="#767674" />
              </svg>
            </div>
            <span className="pl-1">Item</span>
          </div>
          <div className="flex flex-col">
            {ROWS.map((t, i) => (
              <Row key={i} text={t} />
            ))}
          </div>
        </div>
        <div className="ml-px flex h-[237px] w-[10px] flex-col justify-end border border-[#565654] bg-[#31312f]">
          <div className="h-[65px] bg-[#575755]" />
        </div>
      </div>
      <div className="mt-[6px] flex h-[27px] items-end">
        <Tab className="h-[22px] w-[75px] pt-px">Layout</Tab>
        <Tab className="-ml-px h-[27px] w-[130px] pt-[4px]">Item Properties</Tab>
        <Tab className="-ml-px h-[22px] w-[75px] pt-px">Guides</Tab>
      </div>
      <div className="h-px" />
      <DockTitle>Item Properties</DockTitle>
    </div>
  );
}

/* ---------- window chrome ---------- */
function TopBar() {
  return (
    <div className="relative flex h-8 shrink-0 items-center bg-[#23211d] text-[14px] font-bold text-[#c6c4bf] font-[Open_Sans,sans-serif]">
      <div className="w-[89px] pl-3"><Fit w={59}>Activities</Fit></div>
      <svg className="h-[17px] w-[17px]" viewBox="0 0 17 17">
        <circle cx="8" cy="8" r="8" fill="#f0c02c" />
        <circle cx="8" cy="8" r="6" fill="none" stroke="#e3a416" strokeDasharray="2 2" />
        <circle cx="8.500" cy="8" r="3.800" fill="#fff" />
        <path d="M8 8 16 16" stroke="#3c7a4a" strokeWidth="2" />
        <path d="M7.500 7.500H12L7.500 12z" fill="#2d6a3c" />
      </svg>
      <div className="ml-[5px] w-[93px]"><Fit w={88}>QGIS Desktop</Fit></div>
      <svg className="h-[5px] w-[9px]" viewBox="0 0 9 5"><path d="M0 0H9L4.500 5z" fill="#c6c4bf" /></svg>
      <div className="absolute left-[908px] top-0 leading-8"><Fit w={104}>Sat Oct 12, 09:16</Fit></div>
      <svg className="absolute left-[1790px] top-0 h-8 w-[112px]" viewBox="1790 0 112 32">
        <path d="M1802 23 1794 12.500C1799 8 1805 8 1810 12.500z" fill="#6a6965" />
        <path d="M1802 23 1796 14.500C1799.500 12 1804.500 12 1808 14.500z" fill="#d2d0cb" />
        <rect x="1827" y="8" width="11" height="16" rx="5.500" fill="#c6c4bf" />
        <path d="M1829.500 12.500 1835.500 18.500 1832.500 21V11L1835.500 13.500 1829.500 19.500" fill="none" stroke="#23211d" strokeWidth="1.200" />
        <path d="M1855 13.500H1858L1862 9.500V22.500L1858 18.500H1855z" fill="#5d5b57" />
        <path d="M1864 12.500C1866 14.500 1866 17.500 1864 19.500M1866 10C1870 13 1870 19 1866 22" fill="none" stroke="#5d5b57" strokeWidth="1.500" />
        <path d="M1887 10.500H1889.500V9H1894.500V10.500H1897V15H1887z" fill="#6a6965" />
        <rect x="1887" y="15" width="10" height="8" fill="#d2d0cb" />
      </svg>
    </div>
  );
}
function TitleBar() {
  return (
    <div className="relative h-9 shrink-0 rounded-t-[4px] bg-[#575047]">
      <div className="absolute left-[928px] top-0 text-[13.500px] font-bold leading-[35px] text-[#eceae6] font-[Open_Sans,sans-serif]">
        <Fit w={64}>QGIS Atlas</Fit>
      </div>
      <svg className="absolute right-0 top-0 h-9 w-[100px]" viewBox="1820 32 100 36">
        <rect x="1832" y="52" width="8" height="2" fill="#f4f2ee" />
        <rect x="1863" y="47" width="6" height="6" fill="none" stroke="#f4f2ee" strokeWidth="2" />
        <circle cx="1896" cy="50" r="12" fill="#f6821f" />
        <path d="M1892.500 46.500 1899.500 53.500M1899.500 46.500 1892.500 53.500" stroke="#fff" strokeWidth="2.200" />
      </svg>
    </div>
  );
}
const MENU = [
  ["L", "ayout", "w-[59px]"],
  ["E", "dit", "w-[40px]"],
  ["V", "iew", "w-[46px]"],
  ["I", "tems", "w-[51px]"],
  ["A", "dd Item", "w-[74px]"],
  ["", "Atlas", "w-[47px]"],
  ["", "Settings", "w-[60px]"],
];
const Sep = ({ className }) => (
  <div className={"flex h-[34px] shrink-0 items-center justify-center " + className}>
    <div className="h-2 w-px bg-[#444442]" />
  </div>
);

const TOOLS = [
  "moveContent", "editNodes", "addMap", "add3d", "addPicture", "addLabel", "addLegend", "addScale",
  "addNorth", "addShape", "addArrow", "addNode", "addHtml", "addTable", "addPlot",
];

export default function App() {
  return (
    <div className="flex h-[1080px] w-[1920px] flex-col overflow-hidden bg-[#23211d] font-[DejaVu_Sans,sans-serif]">
      <TopBar />
      <TitleBar />
      <div className="flex h-6 shrink-0 items-center bg-[#31312f] pl-[10px] text-[13px] text-[#b0b0ad]">
        {MENU.map(([u, rest, w]) => (
          <div key={rest} className={"shrink-0 whitespace-pre " + w}>
            <span className="underline underline-offset-2">{u}</span>
            {rest}
          </div>
        ))}
      </div>
      <div className="flex h-9 shrink-0 items-start bg-[#31312f]">
        <Sep className="w-[5px]" />
        <Slots names={["save"]} />
        <Sep className="w-[4px]" />
        <Slots names={["newLayout", "duplicate", "manager", "open", "saveTemplate"]} />
        <Sep className="w-[4px]" />
        <Slots names={["addPage"]} />
        <Sep className="w-[3px]" />
        <Slots names={["print", "image", "svg", "pdf", "undo", "redo"]} />
        <Sep className="w-[10px]" />
        <div className="mt-[1px] flex h-[33px] w-[33px] shrink-0 items-center justify-center border border-[#d98422]">
          <Icon n="world" />
        </div>
        <Slots names={["first", "prev"]} />
        <div className="ml-px mt-[2px] flex h-[30px] w-[206px] shrink-0 items-center border border-[#1d1d1b] bg-linear-to-b from-[#555552] to-[#454543] pl-[5px] text-[13px] text-[#9d9d9a]">
          <span className="grow pt-px">1: Davao Occidental</span>
          <svg className="mr-[4px] h-[5px] w-[6px]" viewBox="0 0 6 5"><path d="M.5 0H5.500L3 5z" fill="#b4b4b1" /></svg>
        </div>
        <div className="relative ml-px mt-px flex h-[33px] w-[33px] shrink-0 items-center justify-center border border-[#1d1d1b] bg-[#4f4f4d]">
          <Icon n="next" />
          <svg className="absolute left-[9px] top-[11px] h-[19px] w-[14px]" viewBox="0 0 14 19">
            <path d="M1 1V15L4.500 12 7 17.500 9.800 16.300 7.300 11H12z" fill="#111" stroke="#fff" strokeWidth="1.200" />
          </svg>
        </div>
        <Slots names={["last", "print", "exportAtlas", "atlasSettings"]} />
        <Sep className="w-[8px]" />
        <Slots names={["zoomIn", "zoomOut", "zoomActual", "zoomFull", "refresh"]} />
        <Sep className="w-[9px]" />
        <Slots names={["lock", "unlock", "group", "ungroup", "raise", "align", "distribute", "resize"]} />
      </div>
      <div className="flex h-[921px] shrink-0 bg-[#31312f]">
        <div className="flex w-9 shrink-0 flex-col items-center pl-[3px]">
          <div className="mt-[5px] h-px w-[9px] bg-[#4c4c4a]" />
          <div className="mr-px flex h-[33px] items-center"><Icon n="hand" /></div>
          <div className="mr-px flex h-[34px] items-center"><Icon n="zoomTool" /></div>
          <div className="mb-px mt-px flex h-[33px] w-[33px] items-center justify-center border border-[#d98422]">
            <Icon n="select" />
          </div>
          {TOOLS.map((n) => (
            <div key={n} className="mr-px flex h-[34px] shrink-0 items-center"><Icon n={n} /></div>
          ))}
        </div>
        <div className="flex w-[1351px] shrink-0 flex-col pt-px">
          <HRuler />
          <div className="flex">
            <VRuler />
            <div className="relative h-[899px] w-[1319px] shrink-0 overflow-hidden bg-[#d6d6d4]">
              <Page />
            </div>
            <div className="flex h-[899px] w-[9px] shrink-0 flex-col justify-between border-r border-[#565654] bg-[#2a2a28]">
              <div className="h-[5px] bg-[#555553]" />
              <div className="h-[4px] bg-[#555553]" />
            </div>
          </div>
        </div>
        <SidePanels />
      </div>
      <div className="flex h-[31px] shrink-0 items-center bg-[#31312f] text-[13px] text-[#a9a9a6]">
        <div className="w-[1343px] pl-[6px] pt-[2px]">Atlas feature 1 of 98</div>
        <div className="w-[106px] pl-[6px] pt-[2px]">x: 168 mm</div>
        <div className="w-[106px] pl-[6px] pt-[2px]">y: 0 mm</div>
        <div className="w-[112px] pl-[6px] pt-[2px]">page: 1</div>
        <div className="mt-[1px] flex h-[25px] w-[146px] items-center border border-[#1d1d1b] bg-linear-to-b from-[#555552] to-[#474745] pl-[5px] text-[#a9a9a6]">
          <span className="grow pt-px">100.0%</span>
          <svg className="mr-[4px] h-[5px] w-[5px]" viewBox="0 0 5 5"><path d="M0 0H5L2.500 5z" fill="#b4b4b1" /></svg>
        </div>
        <div className="ml-[6px] mt-[2px] flex h-[9px] w-[101px] items-center bg-[#4d4d4b] pl-[9px]">
          <div className="h-[11px] w-[22px] rounded-[2px] bg-linear-to-br from-[#bdbdbb] to-[#8f8f8d]" />
        </div>
      </div>
    </div>
  );
}
